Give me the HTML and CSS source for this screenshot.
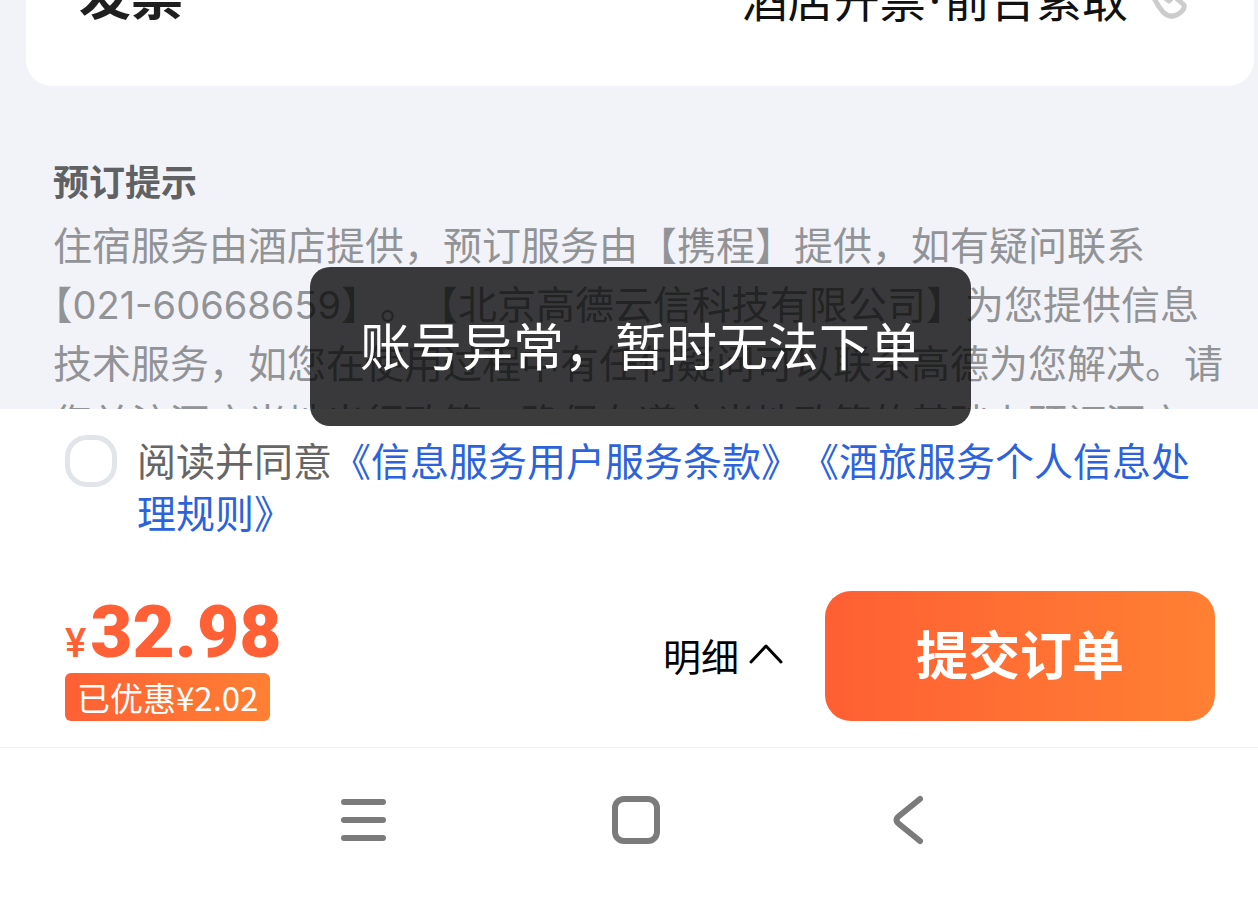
FILE: index.html
```
<!DOCTYPE html>
<html lang="zh-CN">
<head>
    <meta charset="UTF-8">
    <meta name="viewport" content="width=device-width, initial-scale=1.0">
    <title>提交订单</title>
    <link rel="stylesheet" href="styles.css">
</head>
<body>
    <main class="content">
        <section class="invoice">
            <h2 class="invoice-title">发票</h2>
            <div class="invoice-value">
                <span>酒店开票<span class="dot">·</span>前台索取</span>
                <svg class="phone-icon" viewBox="0 0 48 48" aria-hidden="true">
                    <path d="M9 14 Q8 8 13 6 L18 4 L23 14 L19 18 Q21 23 27 27 L32 22 L42 31 Q43 34 40 37 Q30 47 21 38 Q11 26 9 14 Z"/>
                </svg>
            </div>
        </section>

        <section class="tips">
            <h3 class="tips-title">预订提示</h3>
            <p class="tips-text">住宿服务由酒店提供，预订服务由【携程】提供，如有疑问联系<span class="half">【</span><span class="tel">021-60668659</span>】。【北京高德云信科技有限公司】为您提供信息技术服务，如您在使用过程中有任何疑问可以联系高德为您解决。请您关注酒店当地出行政策，确保在遵守当地政策的基础上预订酒店</p>
        </section>
    </main>

    <footer class="footer">
        <div class="agreement">
            <input type="checkbox" class="agree-box" id="agree">
            <div class="agree-text">
                <label for="agree">阅读并同意</label><a href="#">《信息服务用户服务条款》</a><a href="#">《酒旅服务个人信息处理规则》</a>
            </div>
        </div>

        <div class="order-bar">
            <div class="price-box">
                <div class="price"><span class="currency">¥</span>32.98</div>
                <div class="discount">已优惠¥2.02</div>
            </div>
            <button type="button" class="detail">
                明细
                <svg class="arrow-icon" viewBox="0 0 34 20" aria-hidden="true">
                    <path d="M2 18 L17 2 L32 18"/>
                </svg>
            </button>
            <button type="button" class="submit">提交订单</button>
        </div>
    </footer>

    <!-- 系统导航栏 -->
    <nav class="system-nav">
        <button type="button" class="nav-key" aria-label="菜单">
            <svg viewBox="0 0 52 52" aria-hidden="true">
                <path d="M6 8 H45 M6 26 H45 M6 44 H45"/>
            </svg>
        </button>
        <button type="button" class="nav-key" aria-label="主页">
            <svg viewBox="0 0 52 52" aria-hidden="true">
                <rect x="5" y="5" width="42" height="42" rx="9"/>
            </svg>
        </button>
        <button type="button" class="nav-key" aria-label="返回">
            <svg viewBox="0 0 52 52" aria-hidden="true">
                <path d="M38 5 L17 22 Q12 26 17 30 L38 47"/>
            </svg>
        </button>
    </nav>

    <div class="toast" role="alert">账号异常，暂时无法下单</div>
</body>
</html>
```
FILE: styles.css
```
* {
    box-sizing: border-box;
}

body {
    margin: 0;
    height: 100vh;
    display: flex;
    flex-direction: column;
    overflow: hidden; /* 隐藏滚动条 */
    background: #fff;
    font-family: "Noto Sans CJK SC", sans-serif;
    text-spacing-trim: space-all; /* 标点保持全角 */
}

h2, h3, p {
    margin: 0;
}

button {
    border: 0;
    padding: 0;
    background: none;
    font-family: inherit;
}

a {
    color: #2c63dc;
    text-decoration: none;
}

.content {
    flex: 1;
    min-height: 0;
    overflow: hidden;
    background: #f2f3f8;
}

/* 发票卡片，上半部分已滚出屏幕 */
.invoice {
    display: flex;
    align-items: center;
    justify-content: space-between;
    height: 180px;
    margin: -94px 4px 0 26px;
    padding: 0 64px 0 53px;
    background: #fff;
    border-radius: 26px;
}

.invoice-title {
    padding-bottom: 6px;
    font-size: 52px;
    line-height: 60px;
    color: #1f1f1f;
}

.invoice-value {
    display: flex;
    align-items: center;
    gap: 14px;
    padding-top: 4px;
    font-size: 46px;
    line-height: 60px;
    color: #111;
}

.dot {
    margin: 0 3px;
    font-family: "Noto Sans", sans-serif;
}

.phone-icon {
    width: 48px;
    height: 48px;
    fill: none;
    stroke: #ccc;
    stroke-width: 5;
    stroke-linejoin: round;
}

.tips {
    padding: 68px 32px 0 53px;
}

.tips-title {
    font-size: 36px;
    line-height: 52px;
    color: #606163;
}

.tips-text {
    margin-top: 8px;
    font-size: 39px;
    line-height: 59px;
    color: #929396;
}

.half {
    font-feature-settings: "halt";
}

.tel {
    font-family: Inter, sans-serif;
    font-size: 38px;
    line-height: 40px;
}

.footer {
    padding: 24px 43px 26px 65px;
    border-bottom: 1px solid #f1f1f1;
}

.agreement {
    display: flex;
    gap: 20px;
}

.agree-box {
    appearance: none;
    flex: none;
    width: 52px;
    height: 52px;
    margin: 2px 0 0;
    border: 5px solid #e1e4e8;
    border-radius: 22px;
}

.agree-text {
    font-size: 39px;
    line-height: 52px;
    color: #666;
}

.order-bar {
    display: flex;
    align-items: center;
    margin-top: 54px;
}

.price-box {
    display: flex;
    flex-direction: column;
    align-items: flex-start;
    flex: 1;
}

.price {
    font-family: Roboto, sans-serif;
    font-size: 73px;
    font-weight: 900;
    line-height: 82px;
    color: #ff6035;
}

.currency {
    margin-right: 4px;
    font-size: 40px;
    font-weight: 500;
    line-height: 40px;
}

.discount {
    padding: 0 12px;
    border-radius: 6px;
    background: linear-gradient(to right, #ff6035, #ff8033);
    font-size: 33px;
    line-height: 48px;
    color: #fff;
}

.detail {
    display: flex;
    align-items: center;
    gap: 10px;
    margin-right: 42px;
    padding-bottom: 4px;
    font-size: 38px;
    color: #000;
}

.arrow-icon {
    width: 34px;
    height: 20px;
    fill: none;
    stroke: #000;
    stroke-width: 3;
    stroke-linecap: round;
    stroke-linejoin: round;
}

.submit {
    width: 390px;
    height: 130px;
    padding-bottom: 8px;
    border-radius: 26px;
    background: linear-gradient(to right, #ff5f33, #ff8033);
    font-size: 52px;
    font-weight: bold;
    color: #fff;
}

.system-nav {
    display: flex;
    justify-content: center;
    gap: 220px;
    padding: 46px 0 55px 14px;
}

.nav-key {
    width: 52px;
    height: 52px;
}

.nav-key svg {
    display: block;
    fill: none;
    stroke: #7b7b7b;
    stroke-width: 6;
    stroke-linecap: round;
    stroke-linejoin: round;
}

.toast {
    position: absolute;
    top: 267px;
    left: 310px;
    padding: 38px 50px 42px;
    border-radius: 20px;
    background: rgba(0, 0, 0, 0.765);
    font-size: 51px;
    line-height: 79px;
    white-space: nowrap;
    color: #fff;
}
```
